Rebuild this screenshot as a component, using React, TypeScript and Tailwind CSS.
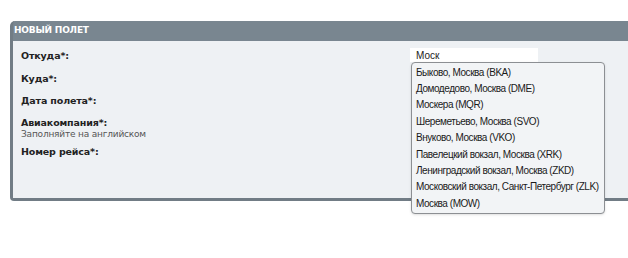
import React from "react";

const airports = [
  "Быково, Москва (BKA)",
  "Домодедово, Москва (DME)",
  "Москера (MQR)",
  "Шереметьево, Москва (SVO)",
  "Внуково, Москва (VKO)",
  "Павелецкий вокзал, Москва (XRK)",
  "Ленинградский вокзал, Москва (ZKD)",
  "Московский вокзал, Санкт-Петербург (ZLK)",
  "Москва (MOW)",
];

function Label({ text }: { text: string }) {
  return (
    <div className="h-[22.5px] flex flex-col justify-center">
      <div className="text-[9.5px] font-bold text-[#222] leading-[12px] tracking-[-0.15px]">{text}</div>
    </div>
  );
}

export default function App() {
  return (
    <div className="w-[628px] h-[258px] bg-white pt-[21px] pl-[10px] overflow-hidden" style={{ fontFamily: '"DejaVu Sans", Verdana, sans-serif' }}>
      <div className="w-[640px] rounded-tl-[5px] rounded-bl-[4px] bg-[#798690] border-l-[3px] border-b-[3px] border-[#717c85]">
        <div className="h-[20px] flex items-center pl-[1px] text-white text-[9px] font-bold tracking-[-0.2px]">
          НОВЫЙ ПОЛЕТ
        </div>
        <div className="relative h-[157px] bg-[#eef1f4] pl-[8px] pt-[4px]">
          <div className="flex">
            <div className="w-[389px] flex flex-col">
              <Label text="Откуда*:" />
              <Label text="Куда*:" />
              <Label text="Дата полета*:" />
              <div className="h-[28px] flex flex-col pt-[4px]">
                <div className="text-[9.5px] font-bold text-[#222] leading-[12px] tracking-[-0.15px]">Авиакомпания*:</div>
                <div className="text-[9px] text-[#555] leading-[11px] tracking-[-0.2px]">Заполняйте на английском</div>
              </div>
              <Label text="Номер рейса*:" />
            </div>
            <div className="relative">
              <div className="mt-[3px] w-[128px] h-[14px] bg-white flex items-center pl-[6px] text-[10px] text-[#222]" style={{ fontFamily: '"Liberation Sans", Arial, sans-serif' }}>
                Моск
              </div>
              <div
                className="absolute left-[1px] top-[17px] w-[194px] rounded-[4px] border border-[#8c8f93] bg-[#f2f4f6] py-[1px] shadow-sm z-10"
                style={{ fontFamily: '"Liberation Sans", Arial, sans-serif' }}
              >
                {airports.map((a) => (
                  <div key={a} className="h-[16.4px] flex items-center pl-[4px] text-[10px] text-[#1a1a1a] whitespace-nowrap tracking-[-0.45px]">
                    {a}
                  </div>
                ))}
              </div>
            </div>
          </div>
        </div>
      </div>
    </div>
  );
}
